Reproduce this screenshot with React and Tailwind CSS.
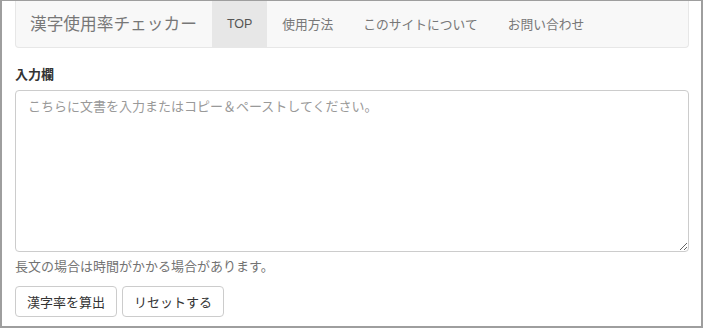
import React from "react";

const jp = { fontFamily: '"Noto Sans CJK JP", "Liberation Sans", sans-serif' };

export default function App() {
  const links = ["使用方法", "このサイトについて", "お問い合わせ"];

  return (
    <div
      className="w-[703px] h-[328px] overflow-hidden bg-white border-t border-l-2 border-r-2 border-b-2 border-[#9e9e9e] pl-[13px] pr-[12px]"
      style={jp}
    >
      {/* Navbar */}
      <nav className="flex h-[47px] items-stretch bg-[#f8f8f8] border-x border-b border-[#e7e7e7] rounded-b-[4px]">
        <div className="flex items-center pl-[14px] pr-[15px] text-[16.7px] text-[#777]">漢字使用率チェッカー</div>
        <div
          className="flex items-center px-[15px] bg-[#e7e7e7] text-[12.5px] text-[#555]"
          style={{ fontFamily: '"Liberation Sans", "Noto Sans CJK JP", sans-serif' }}
        >
          TOP
        </div>
        {links.map((l) => (
          <div key={l} className="flex items-center px-[15px] text-[12.75px] text-[#777]">
            {l}
          </div>
        ))}
      </nav>

      {/* Form */}
      <div className="mt-[17px]">
        <label className="block text-[13px] font-bold leading-[18px] text-[#333]">入力欄</label>
        <textarea
          className="mt-[7px] block w-full h-[162px] rounded-[4px] border border-[#ccc] px-[12px] py-[6px] text-[13px] leading-[18px] text-[#555] placeholder:text-[#999] outline-none"
          placeholder="こちらに文書を入力またはコピー＆ペーストしてください。"
          style={jp}
        />
        <p className="mt-[5px] text-[13px] leading-[18px] text-[#737373]">長文の場合は時間がかかる場合があります。</p>
        <div className="mt-[11px] flex gap-[5px]">
          <button className="h-[31px] px-[11px] rounded-[4px] border border-[#ccc] bg-white text-[13px] text-[#333]">
            漢字率を算出
          </button>
          <button className="h-[31px] px-[11px] rounded-[4px] border border-[#ccc] bg-white text-[13px] text-[#333]">
            リセットする
          </button>
        </div>
      </div>
    </div>
  );
}
